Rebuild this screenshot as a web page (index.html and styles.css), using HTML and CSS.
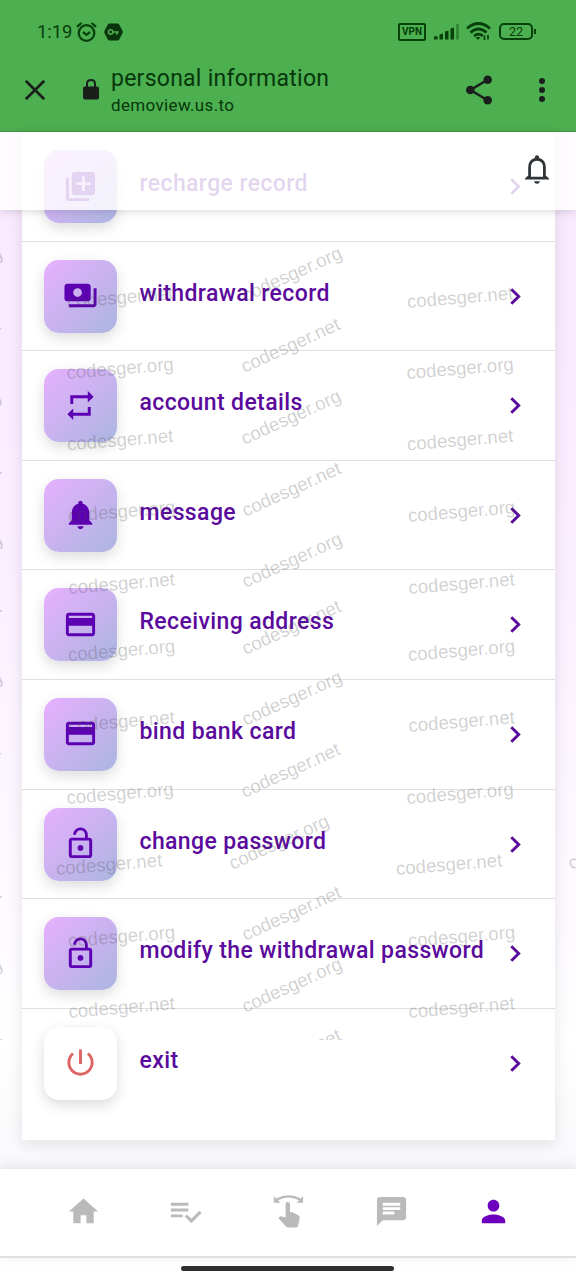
FILE: index.html
```html
<!DOCTYPE html>
<html lang="en">
<head>
<meta charset="utf-8">
<title>personal information</title>
<link rel="stylesheet" href="styles.css">
</head>
<body>
<svg class="defs" aria-hidden="true">
  <symbol id="chevron" viewBox="0 0 11 17"><path d="M1.300 1.300 8.700 8.500l-7.400 7.200" fill="none" stroke="currentColor" stroke-width="2.900"/></symbol>
  <symbol id="card" viewBox="0 0 24 24"><path d="M20 4H4c-1.110 0-1.990.89-1.990 2L2 18c0 1.110.89 2 2 2h16c1.110 0 2-.89 2-2V6c0-1.110-.89-2-2-2zm0 14H4v-5.200h16v5.200zm0-10.400H4V6h16v1.600z"/></symbol>
  <symbol id="lock" viewBox="0 0 24 24"><path d="M12 17c1.100 0 2-.9 2-2s-.9-2-2-2-2 .9-2 2 .9 2 2 2zm6-9h-1V6c0-2.760-2.240-5-5-5S7 3.240 7 6h1.900c0-1.710 1.390-3.100 3.100-3.100s3.100 1.390 3.100 3.100v2H6c-1.100 0-2 .9-2 2v10c0 1.100.9 2 2 2h12c1.100 0 2-.9 2-2V10c0-1.100-.9-2-2-2zm0 12H6V10h12v10z"/></symbol>
</svg>
<div class="screen">
  <header class="browser">
    <div class="status">
      <div class="status-left">
        <span class="time">1:19</span>
        <svg width="21" height="20" viewBox="0 0 21 20" fill="none" stroke="currentColor" stroke-width="2.300"><circle cx="10.500" cy="11" r="7.800"/><path d="M1 4.800 5.400 1M20 4.800 15.600 1M7 10l3.500 2.800L14 10"/></svg>
        <svg class="key" width="19" height="18" viewBox="0 0 20 18"><path d="M5.500 0h9q1 0 1.500 1l3.600 7q.4 1 0 2L16 17q-.5 1-1.500 1h-9q-1 0-1.500-1L.4 10q-.4-1 0-2L4 1q.5-1 1.500-1z" fill="currentColor"/><path d="M9 9h6.500M13.500 9v2.800" fill="none" stroke="#4caf50" stroke-width="1.800"/><circle cx="7" cy="9" r="2.300" fill="none" stroke="#4caf50" stroke-width="1.600"/></svg>
      </div>
      <div class="status-right">
        <span class="vpn">VPN</span>
        <svg width="26" height="17" viewBox="0 0 26 17" fill="currentColor"><path d="M0 13.500 3.500 13v3.500H0zM5.500 11.500 9 10.500v6H5.500zM11 8.500l3.500-1v9H11zM16.500 5.500l3.500-1v12h-3.500z"/><path d="M22 1.500 25 .5v16h-3z" opacity=".35"/></svg>
        <svg width="25" height="19" viewBox="0 0 25 19" fill="none" stroke="currentColor" stroke-width="2.700"><path d="M1 6.500Q12.500-3.500 24 6.500M4.500 10.500q8-7 16 0M8 14q4.500-3.800 9 0"/><path d="M9.500 15h5L12 18z" fill="currentColor" stroke="none"/><path d="M18.500 13.500v4.500M22 13v4.500" stroke-width="1.700"/></svg>
        <span class="battery">22</span>
      </div>
    </div>
    <div class="toolbar">
      <svg class="close" width="20" height="20" viewBox="0 0 20 20"><path d="M.8.8l18.400 18.400M19.200.8.8 19.200" stroke="currentColor" stroke-width="2.700"/></svg>
      <svg class="padlock" width="16" height="21" viewBox="0 0 16 21"><rect y="7.500" width="16" height="13" rx="2" fill="currentColor"/><path d="M4 8.500V5q0-3.900 4-3.900T12 5v3.500" fill="none" stroke="currentColor" stroke-width="2"/></svg>
      <div class="page-id"><h1>personal information</h1><p>demoview.us.to</p></div>
      <svg class="share" width="26" height="30" viewBox="0 0 26 30" fill="currentColor"><path d="M22 4.500 4.500 15 22 25.500" fill="none" stroke="currentColor" stroke-width="2.500"/><circle cx="21.700" cy="4.700" r="4.300"/><circle cx="4.300" cy="15" r="4.300"/><circle cx="21.700" cy="25.300" r="4.300"/></svg>
      <svg class="more" width="6" height="24" viewBox="0 0 6 24" fill="currentColor"><circle cx="3" cy="3" r="3"/><circle cx="3" cy="12" r="3"/><circle cx="3" cy="21" r="3"/></svg>
    </div>
  </header>

  <main class="page">
    <div class="topbar">
      <svg class="alerts" width="24" height="29" viewBox="0 0 24 29"><path d="M0 24.600v-1L3.200 20.500V12.500Q3.200 4.700 9.800 3V2.400Q9.800.3 12 .3t2.200 2.100V3q6.600 1.700 6.600 9.500v8l3.200 3.100v1H0zM6 21.800h12v-9.300Q18 5.700 12 5.700T6 12.500z" fill="currentColor" fill-rule="evenodd"/><path d="M9 26.200h6q-.6 2.600-3 2.600t-3-2.600z" fill="currentColor"/></svg>
    </div>
    <ul class="menu">
      <li class="row"><span class="tile"><svg class="icon" viewBox="0 0 24 24"><path d="M4 6H2v14c0 1.100.9 2 2 2h14v-2H4V6zm16-4H8c-1.100 0-2 .9-2 2v12c0 1.100.9 2 2 2h12c1.100 0 2-.9 2-2V4c0-1.100-.9-2-2-2zm-1 9h-4v4h-2v-4H9V9h4V5h2v4h4v2z"/></svg></span><span class="label">recharge record</span><svg class="chevron"><use href="#chevron"/></svg></li>
      <li class="row"><span class="tile"><svg class="icon" viewBox="0 0 24 24"><path d="M19 14V6c0-1.100-.9-2-2-2H3c-1.100 0-2 .9-2 2v8c0 1.100.9 2 2 2h14c1.100 0 2-.9 2-2zm-9-1c-1.660 0-3-1.340-3-3s1.340-3 3-3 3 1.340 3 3-1.340 3-3 3zm13-6v11c0 1.100-.9 2-2 2H4v-2h17V7h2z"/></svg></span><span class="label">withdrawal record</span><svg class="chevron"><use href="#chevron"/></svg></li>
      <li class="row"><span class="tile"><svg class="icon" viewBox="0 0 24 24"><path d="M7 7h10v3l4-4-4-4v3H5v6h2V7zm10 10H7v-3l-4 4 4 4v-3h12v-6h-2v4z"/></svg></span><span class="label">account details</span><svg class="chevron"><use href="#chevron"/></svg></li>
      <li class="row"><span class="tile"><svg class="icon" viewBox="0 0 24 24"><path d="M12 22c1.100 0 2-.9 2-2h-4c0 1.100.9 2 2 2zm6-6v-5c0-3.070-1.640-5.640-4.500-6.320V4c0-.83-.67-1.500-1.500-1.500s-1.500.67-1.500 1.500v.68C7.630 5.360 6 7.920 6 11v5l-2 2v1h16v-1l-2-2z"/></svg></span><span class="label">message</span><svg class="chevron"><use href="#chevron"/></svg></li>
      <li class="row"><span class="tile"><svg class="icon"><use href="#card"/></svg></span><span class="label">Receiving address</span><svg class="chevron"><use href="#chevron"/></svg></li>
      <li class="row"><span class="tile"><svg class="icon"><use href="#card"/></svg></span><span class="label">bind bank card</span><svg class="chevron"><use href="#chevron"/></svg></li>
      <li class="row"><span class="tile"><svg class="icon"><use href="#lock"/></svg></span><span class="label">change password</span><svg class="chevron"><use href="#chevron"/></svg></li>
      <li class="row"><span class="tile"><svg class="icon"><use href="#lock"/></svg></span><span class="label">modify the withdrawal password</span><svg class="chevron"><use href="#chevron"/></svg></li>
      <li class="row"><span class="tile tile-exit"><svg class="icon" viewBox="0 0 24 24"><path d="M13 3h-2v10h2V3zm4.830 2.170-1.420 1.420C17.990 7.860 19 9.810 19 12c0 3.870-3.130 7-7 7s-7-3.130-7-7c0-2.190 1.010-4.140 2.580-5.420L6.170 5.170C4.230 6.820 3 9.260 3 12c0 4.970 4.030 9 9 9s9-4.030 9-9c0-2.740-1.230-5.180-3.170-6.830z"/></svg></span><span class="label">exit</span><svg class="chevron"><use href="#chevron"/></svg></li>
    </ul>
  </main>

  <nav class="tabs">
    <svg class="icon" viewBox="0 0 24 24"><path d="M10 20v-5.500h4V20h5v-8h3L12 3 2 12h3v8z"/></svg>
    <svg class="icon" viewBox="0 0 24 24"><path d="M14 10H2v2h12v-2zm0-4H2v2h12V6zM2 16h8v-2H2v2zm19.500-4.500L23 13l-6.990 7-4.510-4.500L13 14l3.010 3 5.490-5.500z"/></svg>
    <svg class="icon" viewBox="0 0 24 24"><path d="M2 1.500V6h4.500L4.800 4.300q7.200-3.800 14.400 0L17.500 6H22V1.500l-1.600 1.600q-8.400-4.600-16.800 0zM10 7v9l-3.600-.8-1.400 1.300 5.200 5.700q.7.800 1.700.8H17q1.300 0 1.600-1.300l1.100-5q.3-1.500-1-2.200l-4-2q-.5-.2-1.700-.2V7q0-1.500-1.500-1.500T10 7z"/></svg>
    <svg class="icon" viewBox="0 0 24 24"><path d="M20 2H4c-1.100 0-1.990.9-1.990 2L2 22l4-4h14c1.100 0 2-.9 2-2V4c0-1.100-.9-2-2-2zM6 9h12v2H6V9zm8 5H6v-2h8v2zm4-6H6V6h12v2z"/></svg>
    <svg class="icon active" viewBox="0 0 24 24"><path d="M12 12c2.210 0 4-1.790 4-4s-1.790-4-4-4-4 1.790-4 4 1.790 4 4 4zm0 2c-2.670 0-8 1.340-8 4v2h16v-2c0-2.660-5.330-4-8-4z"/></svg>
  </nav>
  <footer class="gesture"><span class="pill"></span></footer>

  <svg class="watermarks" width="576" height="829" viewBox="0 211 576 829"></svg>
</div>
<script src="watermarks.js"></script>
</body>
</html>
```

FILE: watermarks.js
```js
// Repeats the domain watermark in alternating shallow and steep columns.
const layer = document.querySelector('.watermarks');
const flat = [[68, 308], [67.5, 379], [68, 450.5], [69, 522], [69.500, 594], [69, 661], [69.500, 732], [67.500, 804], [57, 875], [69, 947], [69.500, 1018]];
const steep = [[246, 302], [245, 373], [245, 445], [246, 517], [246, 588], [246, 655], [246, 726], [245, 798], [233, 870], [246, 941], [246, 1013], [246, 1084]];

function mark(x, y, angle, domain) {
  const text = document.createElementNS('http://www.w3.org/2000/svg', 'text');
  text.setAttribute('transform', `translate(${x - 0.5} ${y}) rotate(${angle})`);
  text.textContent = `codesger.${domain}`;
  layer.append(text);
}

flat.forEach(([x, y], i) => {
  [0, 340].forEach(dx => mark(x + dx, y, -4.7, i % 2 ? 'org' : 'net'));
});
steep.forEach(([x, y], i) => {
  [-340, 0].forEach(dx => mark(x + dx, y, -24.5, i % 2 ? 'net' : 'org'));
});
mark(572, 870, -24.5, 'org');
```

FILE: styles.css
```css
* { box-sizing: border-box; }
body { margin: 0; font-family: Roboto, "Liberation Sans", sans-serif; }
h1, p, ul { margin: 0; padding: 0; font-weight: 400; list-style: none; }
.defs { position: absolute; width: 0; height: 0; }
.screen { position: relative; width: 576px; height: 1280px; display: flex; flex-direction: column; overflow: hidden; background: #fff; }

.browser { height: 132px; flex: none; background: #4caf50; border-bottom: 1px solid #469e4a; color: #06400a; }
.status { height: 63px; padding: 0 43px 0 37px; display: flex; align-items: center; justify-content: space-between; }
.status-left, .status-right { display: flex; align-items: center; }
.time { width: 39px; font-size: 18.5px; letter-spacing: -.1px; }
.key { margin-left: 7px; color: #0b350d; }
.vpn { width: 28px; height: 18px; margin-right: 8px; border: 2px solid; border-radius: 2px; font-size: 10px; font-weight: 700; line-height: 14px; text-align: center; }
.status-right svg + svg { margin-left: 6px; }
.battery { position: relative; width: 34px; height: 17px; margin-left: 8px; border: 2px solid; border-radius: 5px; font-size: 12.5px; line-height: 14px; text-align: center; }
.battery::after { content: ""; position: absolute; right: -5px; top: 4px; width: 2px; height: 5px; background: currentColor; }
.toolbar { height: 54px; padding: 0 31px 0 25px; display: flex; align-items: center; color: #1b1f1b; }
.padlock { margin: -2px 12px 0 38px; }
.page-id { flex: 1; padding-top: 3px; color: #07370a; }
.page-id h1 { font-size: 23px; line-height: 28px; letter-spacing: .25px; }
.page-id p { font-size: 17px; line-height: 25px; letter-spacing: .35px; }
.more { margin-left: 47px; }

.page { position: relative; height: 1037px; flex: none; padding: 0 21px 0 22px; background: linear-gradient(#f9e9fd 0, #faeeff 38%, #fdf8ff 68%, #fff 88%, #f9f9fc 100%); }
.topbar { position: absolute; inset: 0 0 auto; z-index: 2; height: 78px; padding: 23px 27px 0 0; display: flex; justify-content: flex-end; align-items: flex-start; background: rgba(255, 255, 255, .83); box-shadow: 0 2px 8px rgba(0, 0, 0, .13); color: #2f3538; }
.menu { height: 1008px; background: #fff; box-shadow: 0 4px 14px rgba(30, 20, 50, .11); }
.row { height: 109.6px; padding: 18px 34px 0 22px; display: flex; align-items: flex-start; border-bottom: 1.5px solid #dfdfe1; color: #5a0a9c; }
.row:last-child { border: 0; }
.tile { width: 73px; height: 73px; display: grid; place-items: center; border-radius: 15px; background: linear-gradient(135deg, #e4b0fd 5%, #aeb5e2 95%); box-shadow: 0 5px 14px rgba(0, 0, 0, .14); color: #5c00b2; }
.tile-exit { background: #fff; color: #dd6664; }
.icon { width: 35px; height: 35px; fill: currentColor; }
.tile .icon { margin-top: -1px; }
.label { flex: 1; margin: 18px 0 0 22.5px; font-size: 23px; line-height: 32px; font-weight: 500; letter-spacing: .39px; white-space: nowrap; }
.chevron { width: 11px; height: 17px; margin-top: 28px; }

.tabs { position: relative; height: 89px; flex: none; padding: 0 31px 2px 32px; display: grid; grid-template-columns: repeat(5, 1fr); place-items: center; background: #fff; border-bottom: 2px solid #e1e1e1; box-shadow: 0 -2px 12px rgba(0, 0, 0, .1); color: #bababa; }
.active { color: #6c00bd; }
.gesture { height: 22px; display: flex; justify-content: center; align-items: flex-start; padding: 8px 1px 0 0; }
.pill { width: 213px; height: 5px; border-radius: 3px; background: #303030; }

.watermarks { position: absolute; left: 0; top: 211px; z-index: 1; pointer-events: none; overflow: hidden; font-family: "Liberation Sans", Arial, sans-serif; font-size: 18.6px; fill: rgba(70, 70, 70, .25); }
```
